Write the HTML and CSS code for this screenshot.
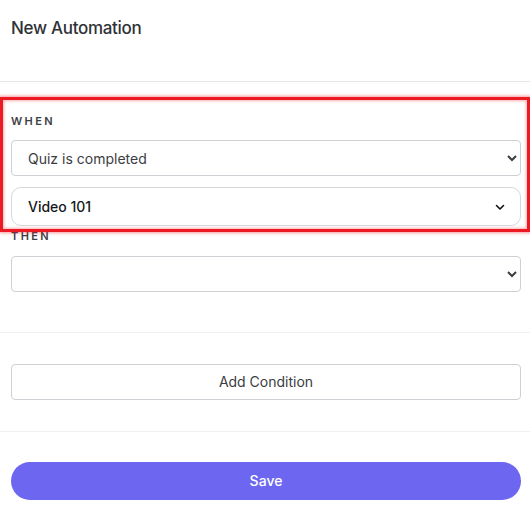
FILE: index.html
```html
<!DOCTYPE html>
<html>
<head>
<meta charset="utf-8">
<link rel="stylesheet" href="styles.css">
</head>
<body>
<div class="panel">
  <header class="header">
    <h1 class="title">New Automation</h1>
  </header>
  <section class="section section-rules">
    <div class="label">WHEN</div>
    <select class="native-select"><option>Quiz is completed</option></select>
    <div class="custom-select">
      <span class="custom-value">Video 101</span>
      <svg class="custom-chevron" width="12" height="12" viewBox="0 0 12 12"><path d="M2.5 4.5 L6 8 L9.5 4.5" fill="none" stroke="#111" stroke-width="1.6" stroke-linecap="round" stroke-linejoin="round"/></svg>
    </div>
    <div class="label label-then">THEN</div>
    <select class="native-select"><option></option></select>
    <div class="highlight"></div>
  </section>
  <section class="section section-conditions">
    <button class="btn-outline">Add Condition</button>
  </section>
  <section class="section section-save">
    <button class="btn-primary">Save</button>
  </section>
</div>
</body>
</html>
```
FILE: styles.css
```css
html, body {
  margin: 0;
  padding: 0;
  background: #ffffff;
}
body {
  font-family: "Inter", "Liberation Sans", sans-serif;
  color: #333;
  width: 530px;
}
.panel {
  position: relative;
  display: flex;
  flex-direction: column;
}
.header {
  border-bottom: 1px solid #e6e7ea;
  padding: 18px 11px 0;
  box-sizing: border-box;
  height: 82px;
}
.title {
  margin: 0;
  font-size: 17px;
  line-height: 20px;
  font-weight: 500;
  letter-spacing: -0.3px;
  color: #2f3237;
}
.section {
  padding: 0 9px 0 11px;
  display: flex;
  flex-direction: column;
}
.section-rules {
  position: relative;
  padding-top: 31px;
  padding-bottom: 40px;
  border-bottom: 1px solid #eeeff1;
}
.label {
  font-size: 11px;
  line-height: 16px;
  font-weight: 600;
  letter-spacing: 2.4px;
  color: #3b3e43;
  margin-bottom: 11px;
}
.label-then {
  margin-top: 2px;
  margin-bottom: 12px;
}
.native-select {
  height: 36px;
  border: 1px solid #cdd0d5;
  border-radius: 4px;
  background: #fff;
  font-family: inherit;
  font-size: 14px;
  color: #3a3d42;
  padding: 0 10px 0 12px;
  margin: 0;
  box-sizing: border-box;
  width: 100%;
}
.custom-select {
  margin-top: 11px;
  height: 39px;
  border: 1px solid #d6d8dc;
  border-radius: 10px;
  display: flex;
  align-items: center;
  justify-content: space-between;
  padding: 0 14px 0 16px;
  box-sizing: border-box;
}
.custom-value {
  font-size: 14px;
  font-weight: 500;
  color: #16181b;
}
.highlight {
  position: absolute;
  left: 0;
  top: 15px;
  width: 530px;
  height: 135px;
  box-sizing: border-box;
  border: 3px solid #ec1a22;
  box-shadow: 0 0 3px 1px rgba(236, 26, 34, 0.45), inset 0 0 3px 1px rgba(236, 26, 34, 0.35);
  pointer-events: none;
}
.section-conditions {
  padding-top: 31px;
  padding-bottom: 31px;
  border-bottom: 1px solid #eeeff1;
}
.btn-outline {
  height: 36px;
  border: 1px solid #cdd0d5;
  border-radius: 4px;
  background: #fff;
  font-family: inherit;
  font-size: 14px;
  color: #3a3d42;
  width: 100%;
  padding-bottom: 2px;
}
.section-save {
  padding-top: 30px;
}
.btn-primary {
  height: 38px;
  border: none;
  border-radius: 19px;
  background: #6c66f1;
  color: #fff;
  font-family: inherit;
  font-size: 14px;
  font-weight: 500;
  width: 100%;
  padding-bottom: 2px;
}
```
